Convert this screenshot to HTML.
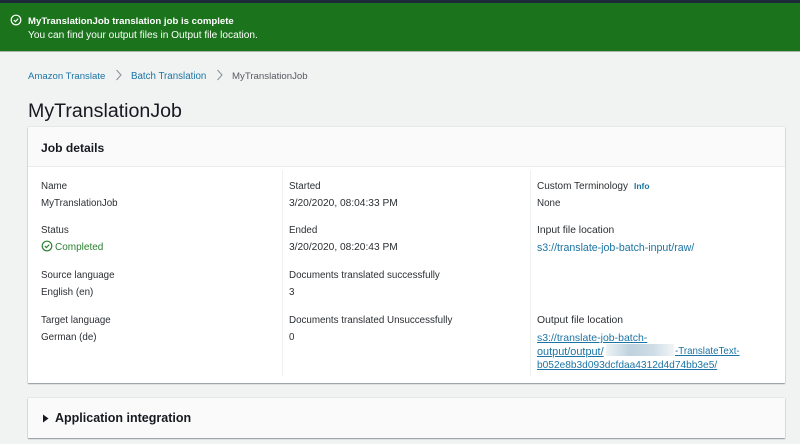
<!DOCTYPE html>
<html>
<head>
<meta charset="utf-8">
<style>
html,body{margin:0;padding:0;width:800px;height:444px;overflow:hidden;background:#f1f3f3;font-family:"Liberation Sans",sans-serif;color:#16191f}
#w{position:absolute;left:0;top:0;width:800px;height:444px;filter:blur(.3px)}
.t{position:absolute;white-space:nowrap;font-size:9.8px;line-height:14px;color:#2b2f33}
.l{color:#1b74a4}
.box{position:absolute;background:#fff;box-shadow:0 1px 1px rgba(0,28,36,.4),0 0 1px rgba(0,28,36,.25)}
</style>
</head>
<body>
<div id="w">
<div style="position:absolute;left:0;top:0;width:800px;height:3px;background:#1c2b39"></div>
<div style="position:absolute;left:0;top:3px;width:800px;height:48px;background:#1b731c"></div>
<div style="position:absolute;left:0;top:51px;width:800px;height:1px;background:#aab5ad"></div>
<svg style="position:absolute;left:10px;top:14px" width="12" height="12" viewBox="0 0 12 12"><circle cx="6" cy="6" r="4.8" fill="none" stroke="#fff" stroke-width="1.2"/><path d="M3.800 6l1.600 1.600 2.800-3" fill="none" stroke="#fff" stroke-width="1.2"/></svg>
<div class="t" style="left:28px;top:15px;color:#fff;font-weight:bold;font-size:9.600px">MyTranslationJob translation job is complete</div>
<div class="t" style="left:28px;top:29px;color:#fff;font-size:10.150px">You can find your output files in Output file location.</div>

<div class="t l" style="left:28px;top:70px;font-size:9.600px">Amazon Translate</div>
<svg style="position:absolute;left:115px;top:69px" width="8" height="12" viewBox="0 0 8 12"><path d="M1.500 1L6 6l-4.500 5" fill="none" stroke="#8d9599" stroke-width="1.1"/></svg>
<div class="t l" style="left:131px;top:70px;font-size:9.750px">Batch Translation</div>
<svg style="position:absolute;left:216px;top:69px" width="8" height="12" viewBox="0 0 8 12"><path d="M1.500 1L6 6l-4.500 5" fill="none" stroke="#8d9599" stroke-width="1.1"/></svg>
<div class="t" style="left:232px;top:70px;color:#555b61;font-size:9.650px">MyTranslationJob</div>
<div style="position:absolute;left:28px;top:98px;font-size:19.600px;line-height:26px;color:#16191f;white-space:nowrap">MyTranslationJob</div>

<div class="box" style="left:28px;top:127px;width:757px;height:256px"></div>
<div style="position:absolute;left:28px;top:127px;width:757px;height:40px;background:#fafafa;border-bottom:1px solid #e9ebed;box-sizing:border-box"></div>
<div style="position:absolute;left:41px;top:140px;font-size:12.100px;line-height:16px;font-weight:bold;color:#16191f;white-space:nowrap">Job details</div>

<div style="position:absolute;left:282px;top:170px;width:1px;height:206px;background:#eff1f1"></div>
<div style="position:absolute;left:530px;top:170px;width:1px;height:206px;background:#eff1f1"></div>

<div class="t" style="left:41px;top:180px">Name</div>
<div class="t" style="left:41px;top:197px;font-size:9.760px">MyTranslationJob</div>
<div class="t" style="left:41px;top:224px">Status</div>
<svg style="position:absolute;left:41px;top:240px" width="12" height="12" viewBox="0 0 12 12"><circle cx="6" cy="6" r="4.800" fill="none" stroke="#2c8031" stroke-width="1.2"/><path d="M3.800 6l1.600 1.600 2.800-3" fill="none" stroke="#2c8031" stroke-width="1.2"/></svg>
<div class="t" style="left:55px;top:241px;color:#2c8031;font-size:10px">Completed</div>
<div class="t" style="left:41px;top:269px;font-size:9.730px">Source language</div>
<div class="t" style="left:41px;top:286px">English (en)</div>
<div class="t" style="left:41px;top:314px;font-size:9.730px">Target language</div>
<div class="t" style="left:41px;top:331px">German (de)</div>

<div class="t" style="left:289px;top:180px">Started</div>
<div class="t" style="left:289px;top:197px;font-size:10.200px">3/20/2020, 08:04:33 PM</div>
<div class="t" style="left:289px;top:224px">Ended</div>
<div class="t" style="left:289px;top:241px;font-size:10.200px">3/20/2020, 08:20:43 PM</div>
<div class="t" style="left:289px;top:269px">Documents translated successfully</div>
<div class="t" style="left:289px;top:286px">3</div>
<div class="t" style="left:289px;top:314px">Documents translated Unsuccessfully</div>
<div class="t" style="left:289px;top:331px">0</div>

<div class="t" style="left:537px;top:180px;font-size:10px">Custom Terminology</div>
<div class="t l" style="left:634px;top:179px;font-size:8.500px;font-weight:bold">Info</div>
<div class="t" style="left:537px;top:197px">None</div>
<div class="t" style="left:537px;top:224px;font-size:10.300px">Input file location</div>
<div class="t l" style="left:537px;top:241px;font-size:10.600px">s3://translate-job-batch-input/raw/</div>
<div class="t" style="left:537px;top:314px;font-size:10.400px">Output file location</div>
<div class="t l" style="left:537px;top:331px;text-decoration:underline;font-size:10.500px">s3://translate-job-batch-</div>
<div class="t l" style="left:537px;top:345px;text-decoration:underline;font-size:10.900px">output/output/</div>
<div style="position:absolute;left:606px;top:344px;width:68px;height:12px;background:linear-gradient(90deg,#eef3f6,#bfd2de 35%,#cfdde6 70%,#f2f5f7)"></div>
<div class="t l" style="left:675px;top:345px;text-decoration:underline;font-size:9.750px">-TranslateText-</div>
<div class="t l" style="left:537px;top:359px;text-decoration:underline;font-size:10.170px">b052e8b3d093dcfdaa4312d4d74bb3e5/</div>

<div class="box" style="left:28px;top:398px;width:757px;height:40px;background:#fafafa"></div>
<svg style="position:absolute;left:42px;top:414px" width="7" height="9" viewBox="0 0 7 9"><path d="M1 .5l5.500 4-5.500 4z" fill="#16191f"/></svg>
<div style="position:absolute;left:55px;top:410px;font-size:12.500px;line-height:16px;font-weight:bold;color:#16191f;white-space:nowrap">Application integration</div>
</div>
</body>
</html>
